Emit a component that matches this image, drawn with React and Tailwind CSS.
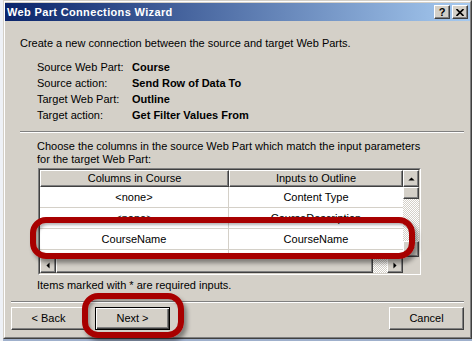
import React from 'react';

const raised =
  'border border-t-white border-l-white border-r-[#404040] border-b-[#404040] shadow-[inset_-1px_-1px_0_#808080]';

function Arrow({ dir }) {
  const pts = {
    up: '0,4 7,4 3.5,0.5',
    down: '0,0.5 7,0.5 3.5,4',
    left: '4,0 4,7 0.5,3.5',
    right: '0.5,0 0.5,7 4,3.5',
  }[dir];
  const vertical = dir === 'up' || dir === 'down';
  return (
    <svg width={vertical ? 7 : 4} height={vertical ? 4 : 7} viewBox={vertical ? '0 0 7 4.5' : '0 0 4.5 7'}>
      <polygon points={pts} fill="#000" />
    </svg>
  );
}

function Row({ left, right, last }) {
  return (
    <div className={`flex h-[21px] ${last ? '' : 'border-b border-[#d4d0c8]'}`}>
      <div className="w-[189px] border-r border-[#d4d0c8] flex items-center justify-center">{left}</div>
      <div className="flex-1 flex items-center justify-center">{right}</div>
    </div>
  );
}

export default function App() {
  return (
    <div className="relative w-[472px] h-[341px] overflow-hidden bg-[#9fb0cc] font-['Liberation_Sans',Arial,sans-serif] text-[11px] text-black">
      <div className="absolute left-0 top-0 w-[3px] h-[341px] bg-[#eef1f6]" />
      {/* dialog frame */}
      <div className="ml-[3px] w-[469px] h-[339px] border-l border-t border-[#d4d0c8] border-r border-b border-r-[#404040] border-b-[#404040] bg-[#d4d0c8]">
        <div className="h-full border-l border-t border-white border-r border-b border-r-[#808080] border-b-[#808080] pt-[1px] flex flex-col">
          {/* title bar */}
          <div className="h-[18px] flex items-center pl-[2px] pr-[2px] bg-[linear-gradient(to_right,#0a246a,#a6caf0)]">
            <span className="text-white font-bold leading-[18px] tracking-[0.35px]">Web Part Connections Wizard</span>
            <div className="ml-auto flex gap-[2px]">
              <div className={`w-[16px] h-[14px] bg-[#d4d0c8] ${raised} flex items-center justify-center text-[11px] font-bold leading-none`}>?</div>
              <div className={`w-[16px] h-[14px] bg-[#d4d0c8] ${raised} flex items-center justify-center`}>
                <svg width="8" height="7" viewBox="0 0 8 7">
                  <path d="M0.5 0 L7.5 7 M7.5 0 L0.5 7" stroke="#000" strokeWidth="1.6" />
                </svg>
              </div>
            </div>
          </div>

          {/* body */}
          <div className="flex-1 px-[6px] flex flex-col">
            <div className="mt-[16px] pl-[9px] leading-[13px]">
              Create a new connection between the source and target Web Parts.
            </div>

            <div className="mt-[9px] pl-[26px] grid grid-cols-[95px_auto] leading-[16px]">
              <span>Source Web Part:</span>
              <span className="font-bold">Course</span>
              <span>Source action:</span>
              <span className="font-bold">Send Row of Data To</span>
              <span>Target Web Part:</span>
              <span className="font-bold">Outline</span>
              <span>Target action:</span>
              <span className="font-bold">Get Filter Values From</span>
            </div>

            <div className="mt-[8px] ml-[9px] border-t border-[#808080] border-b border-b-white" />

            <div className="mt-[7px] pl-[26px] leading-[13px]">
              Choose the columns in the source Web Part which match the input parameters
              <br />
              for the target Web Part:
            </div>

            {/* table */}
            <div className="mt-[2px] ml-[27px] w-[383px] h-[107px] border border-t-[#808080] border-l-[#808080] border-r-white border-b-white">
              <div className="w-full h-full border border-t-[#404040] border-l-[#404040] border-r-[#d4d0c8] border-b-[#d4d0c8] flex">
                <div className="w-[363px] flex flex-col">
                  <div className="flex h-[17px]">
                    <div className={`w-[189px] bg-[#d4d0c8] ${raised} flex items-center justify-center leading-none`}>Columns in Course</div>
                    <div className={`flex-1 bg-[#d4d0c8] ${raised} flex items-center justify-center leading-none`}>Inputs to Outline</div>
                  </div>
                  <div className="h-[70px] bg-white overflow-hidden">
                    <Row left="<none>" right="Content Type" />
                    <Row left="<none>" right="CourseDescription" />
                    <Row left="CourseName" right="CourseName" />
                    <Row left="" right="" last />
                  </div>
                  <div className="h-[16px] flex">
                    <div className={`w-[16px] bg-[#d4d0c8] ${raised} flex items-center justify-center`}>
                      <Arrow dir="left" />
                    </div>
                    <div className={`w-[317px] bg-[#d4d0c8] ${raised}`} />
                    <div className="flex-1 bg-[image:repeating-conic-gradient(#d4d0c8_0%_25%,#ffffff_0%_50%)] bg-[length:2px_2px]" />
                    <div className={`w-[16px] bg-[#d4d0c8] ${raised} flex items-center justify-center`}>
                      <Arrow dir="right" />
                    </div>
                  </div>
                </div>
                <div className="w-[16px] flex flex-col">
                  <div className={`h-[17px] bg-[#d4d0c8] ${raised} flex items-center justify-center`}>
                    <Arrow dir="up" />
                  </div>
                  <div className={`h-[12px] bg-[#d4d0c8] ${raised}`} />
                  <div className="flex-1 bg-[image:repeating-conic-gradient(#d4d0c8_0%_25%,#ffffff_0%_50%)] bg-[length:2px_2px]" />
                  <div className={`h-[16px] bg-[#d4d0c8] ${raised} flex items-center justify-center`}>
                    <Arrow dir="down" />
                  </div>
                  <div className="h-[16px] bg-[#d4d0c8]" />
                </div>
              </div>
            </div>

            <div className="mt-[4px] pl-[26px] leading-[13px]">Items marked with * are required inputs.</div>

            <div className="mt-[9px] border-t border-[#808080] border-b border-b-white" />

            <div className="mt-[4px] flex">
              <div className={`w-[75px] h-[23px] bg-[#d4d0c8] ${raised} flex items-center justify-center`}>&lt; Back</div>
              <div className="ml-[9px] w-[75px] h-[23px] bg-[#d4d0c8] border border-black shadow-[inset_1px_1px_0_#fff,inset_-1px_-1px_0_#404040,inset_-2px_-2px_0_#808080] flex items-center justify-center">
                Next &gt;
              </div>
              <div className={`ml-auto w-[75px] h-[23px] bg-[#d4d0c8] ${raised} flex items-center justify-center`}>Cancel</div>
            </div>
          </div>
        </div>
      </div>

      {/* callout highlights */}
      <div className="absolute left-[30px] top-[217px] w-[385px] h-[42px] rounded-[16px] border-[6px] border-[#a80000] shadow-[3px_4px_4px_rgba(0,0,0,0.4),inset_2px_2px_3px_rgba(0,0,0,0.3)]" />
      <div className="absolute left-[82px] top-[293px] w-[102px] h-[45px] rounded-[16px] border-[6px] border-[#a80000] shadow-[3px_4px_4px_rgba(0,0,0,0.4),inset_2px_2px_3px_rgba(0,0,0,0.3)]" />
    </div>
  );
}
